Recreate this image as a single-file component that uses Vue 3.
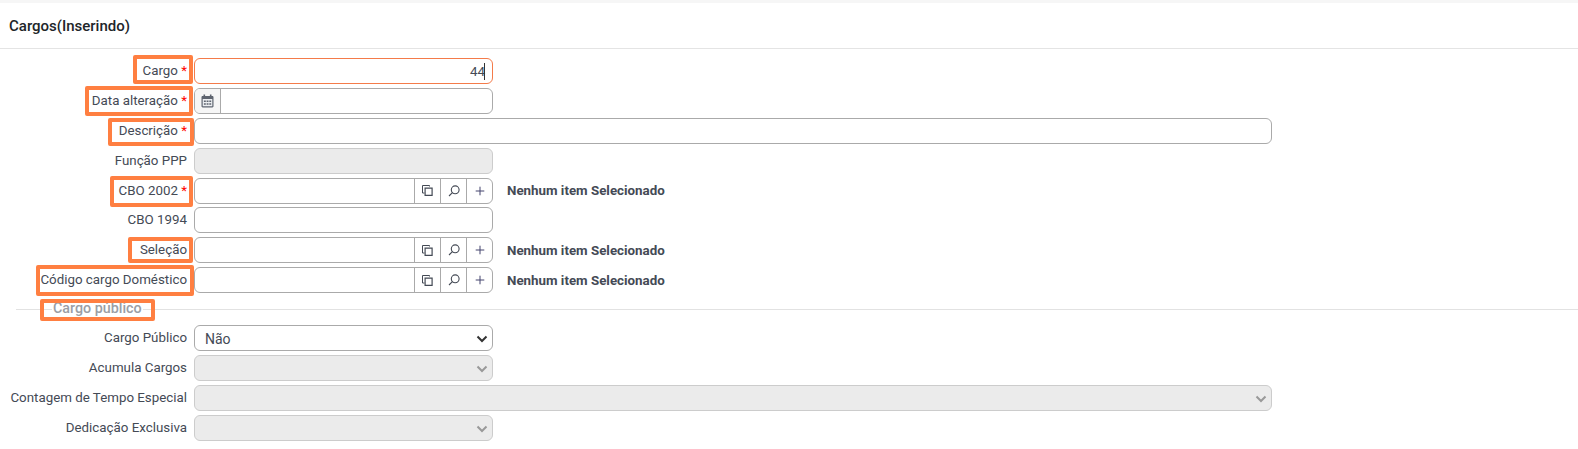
<script setup>
const topRows = [
  { label: 'Cargo', req: true, hl: 'hl-cargo', kind: 'focus' },
  { label: 'Data alteração', req: true, hl: 'hl-data', kind: 'date' },
  { label: 'Descrição', req: true, hl: 'hl-desc', kind: 'wide' },
  { label: 'Função PPP', kind: 'disabled' },
  { label: 'CBO 2002', req: true, hl: 'hl-cbo', kind: 'lookup' },
  { label: 'CBO 1994', kind: 'plain' },
  { label: 'Seleção', hl: 'hl-sel', kind: 'lookup' },
  { label: 'Código cargo Doméstico', hl: 'hl-cod', kind: 'lookup' },
]
const bottomRows = [
  { label: 'Cargo Público', value: 'Não' },
  { label: 'Acumula Cargos', off: true },
  { label: 'Contagem de Tempo Especial', off: true, wide: true },
  { label: 'Dedicação Exclusiva', off: true },
]
</script>

<template>
  <div class="page">
    <div class="band"></div>
    <header class="head"><h1>Cargos(Inserindo)</h1></header>
    <form class="form" @submit.prevent>
      <div v-for="r in topRows" :key="r.label" class="row">
        <label class="lbl" :class="r.hl">
          <span>{{ r.label }}</span><span v-if="r.req" class="req"> *</span>
        </label>

        <div v-if="r.kind === 'focus'" class="box focus"><span class="val">44</span><i class="caret"></i></div>

        <div v-else-if="r.kind === 'date'" class="box date">
          <span class="addon">
            <svg width="13" height="14" viewBox="0 0 13 14"><path fill="#5f6570" d="M2.5 0.5h1.6v1.4h4.8V0.5h1.6v1.4h.8c.7 0 1.2.5 1.2 1.2v9.2c0 .7-.5 1.2-1.2 1.2H1.7c-.7 0-1.2-.5-1.2-1.2V3.1c0-.7.5-1.2 1.2-1.2h.8z"/><path fill="#eceef1" d="M1.7 5h9.6v7.3H1.7z"/><path fill="#5f6570" d="M2.9 6.4h1.9v1.6H2.9zM5.6 6.4h1.9v1.6H5.6zM8.3 6.4h1.9v1.6H8.3zM2.9 9.2h1.9v1.6H2.9zM5.6 9.2h1.9v1.6H5.6zM8.3 9.2h1.9v1.6H8.3z"/></svg>
          </span>
        </div>

        <div v-else-if="r.kind === 'wide'" class="box wide"></div>
        <div v-else-if="r.kind === 'disabled'" class="box off"></div>
        <div v-else-if="r.kind === 'plain'" class="box"></div>

        <template v-else>
          <div class="box lookup">
            <span class="grow"></span>
            <span class="btn">
              <svg width="11" height="11" viewBox="0 0 11 11" fill="none" stroke="#444a55"><path d="M7.5 1.5v-1h-7v7.5h2"/><path stroke-width="1.2" d="M3.1 3.1h7v7.3h-7z"/></svg>
            </span>
            <span class="btn">
              <svg width="12" height="12" viewBox="0 0 12 12" fill="none" stroke="#444a55" stroke-width="1.1"><circle cx="7.2" cy="4.8" r="3.9"/><path d="M4.4 7.6 1 11"/></svg>
            </span>
            <span class="btn">
              <svg width="10" height="10" viewBox="0 0 10 10" fill="none" stroke="#45456f"><path d="M5 .7v8.6M.7 5h8.6"/></svg>
            </span>
          </div>
          <strong class="none">Nenhum item Selecionado</strong>
        </template>
      </div>

      <div class="legend"><span class="legend-text">Cargo público</span></div>

      <div v-for="r in bottomRows" :key="r.label" class="row">
        <label class="lbl"><span>{{ r.label }}</span></label>
        <div class="box select" :class="{ off: r.off, wide: r.wide }">
          <span class="val-left">{{ r.value }}</span>
          <svg class="chev" width="12" height="8" viewBox="0 0 12 8" fill="none" :stroke="r.off ? '#999' : '#333'" stroke-width="2"><path d="M1.5 1.5 6 6l4.5-4.5"/></svg>
        </div>
      </div>
    </form>
  </div>
</template>

<style>
html, body { margin: 0; background: #fff; }
</style>

<style scoped>
.page { width: 1578px; height: 449px; overflow: hidden; font-family: Roboto, "Liberation Sans", sans-serif; font-size: 13.33px; color: #444a55; background: #fff; }
.band { height: 3px; background: #f6f6f6; }
.head { height: 46px; box-sizing: border-box; border-bottom: 1px solid #e4e4e4; display: flex; align-items: center; padding: 0 0 0 9px; }
.head h1 { margin: 0; font-size: 15px; font-weight: 500; color: #212529; }
.form { padding-top: 9px; }
.row { display: flex; align-items: center; height: 26px; margin-bottom: 3.9px; }
.lbl { position: relative; width: 187px; margin-right: 7px; text-align: right; white-space: nowrap; flex: none; line-height: 24px; }
.req { color: #f00; }
.box { position: relative; box-sizing: border-box; width: 299px; height: 26px; flex: none; border: 1px solid #aaa; border-radius: 6px; background: #fff; display: flex; align-items: center; overflow: hidden; }
.wide { width: 1078px; }
.off { background: #ebebeb; border-color: #ccc; }
.focus { border-color: #f47b4a; justify-content: flex-end; padding-right: 7px; }
.caret { display: block; width: 1px; height: 17px; background: #333; margin-left: -1px; }
.addon { width: 26px; height: 100%; box-sizing: border-box; flex: none; display: flex; align-items: center; justify-content: center; background: #f6f6f6; border-right: 1px solid #aaa; }
.grow { flex: 1; }
.btn { width: 26px; height: 100%; flex: none; display: flex; align-items: center; justify-content: center; border-left: 1px solid #aaa; box-sizing: border-box; }
.none { margin-left: 14px; font-size: 13.33px; font-weight: 700; color: #444a55; }
.select { justify-content: space-between; padding: 1px 4px 0 10px; font-size: 14px; }
.chev { flex: none; }
.legend { height: 0; margin: 16px 0 15.2px 16px; border-top: 1px solid #e2e2e2; position: relative; }
.legend-text { position: absolute; left: 36px; top: -11px; line-height: 18px; background: #fff; padding: 0 1px; font-size: 14.3px; font-weight: 500; color: #9a9ea5; }
.legend-text::after { content: ""; position: absolute; left: -12px; right: -12px; top: 0; bottom: -4px; border: 4px solid #ff7f41; border-radius: 2px; }
.hl-cargo::after, .hl-data::after, .hl-desc::after, .hl-cbo::after, .hl-sel::after, .hl-cod::after { content: ""; position: absolute; right: -6px; border: 4px solid #ff7f41; border-radius: 2px; }
.hl-cargo::after { left: 133px; top: -4px; bottom: -1px; }
.hl-data::after { left: 85px; top: -3px; bottom: -3px; }
.hl-desc::after { left: 108px; top: -1px; bottom: -3px; right: -7px; }
.hl-cbo::after { left: 110px; top: -3px; bottom: -4px; }
.hl-sel::after { left: 128px; top: -1px; bottom: -1px; }
.hl-cod::after { left: 36px; top: -3px; bottom: -4px; right: -7px; }
</style>
